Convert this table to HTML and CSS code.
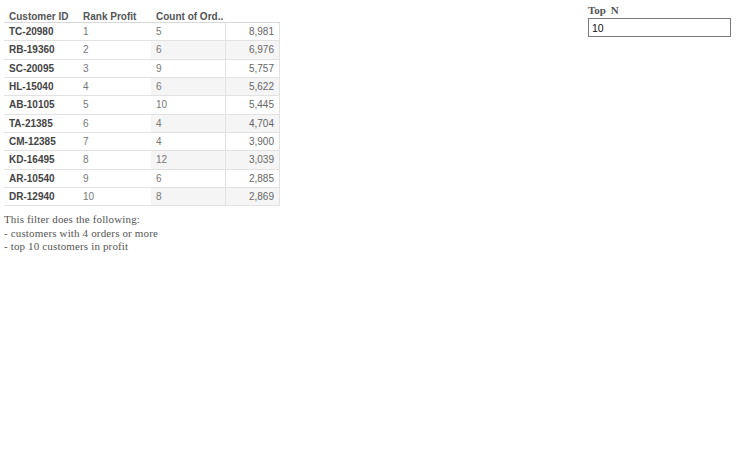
FILE: index.html
```html
<!DOCTYPE html>
<html>
<head>
<meta charset="utf-8">
<link rel="stylesheet" href="styles.css">
</head>
<body>
<div class="page">
  <div class="left">
    <div class="table">
      <div class="row head">
        <div class="c c1">Customer ID</div>
        <div class="c c2">Rank Profit</div>
        <div class="c c3">Count of Ord..</div>
        <div class="c c4"></div>
      </div>
      <div class="row"><div class="c c1">TC-20980</div><div class="c c2">1</div><div class="c c3">5</div><div class="c c4">8,981</div></div>
      <div class="row alt"><div class="c c1">RB-19360</div><div class="c c2">2</div><div class="c c3">6</div><div class="c c4">6,976</div></div>
      <div class="row"><div class="c c1">SC-20095</div><div class="c c2">3</div><div class="c c3">9</div><div class="c c4">5,757</div></div>
      <div class="row alt"><div class="c c1">HL-15040</div><div class="c c2">4</div><div class="c c3">6</div><div class="c c4">5,622</div></div>
      <div class="row"><div class="c c1">AB-10105</div><div class="c c2">5</div><div class="c c3">10</div><div class="c c4">5,445</div></div>
      <div class="row alt"><div class="c c1">TA-21385</div><div class="c c2">6</div><div class="c c3">4</div><div class="c c4">4,704</div></div>
      <div class="row"><div class="c c1">CM-12385</div><div class="c c2">7</div><div class="c c3">4</div><div class="c c4">3,900</div></div>
      <div class="row alt"><div class="c c1">KD-16495</div><div class="c c2">8</div><div class="c c3">12</div><div class="c c4">3,039</div></div>
      <div class="row"><div class="c c1">AR-10540</div><div class="c c2">9</div><div class="c c3">6</div><div class="c c4">2,885</div></div>
      <div class="row alt last"><div class="c c1">DR-12940</div><div class="c c2">10</div><div class="c c3">8</div><div class="c c4">2,869</div></div>
    </div>
    <div class="note">
      <div>This filter does the following:</div>
      <div>- customers with 4 orders or more</div>
      <div>- top 10 customers in profit</div>
    </div>
  </div>
  <div class="right">
    <div class="label">Top N</div>
    <div class="input">10</div>
  </div>
</div>
</body>
</html>
```
FILE: styles.css
```css
html, body {
  margin: 0;
  padding: 0;
  background: #fff;
}
.page {
  display: flex;
  width: 736px;
  height: 454px;
  padding: 0 5px 0 4px;
  box-sizing: border-box;
}
.left {
  width: 276px;
}
.table {
  width: 276px;
  margin-top: 10px;
  font-family: "Liberation Sans", Arial, sans-serif;
  font-size: 10px;
}
.row {
  display: flex;
  height: 17.33px;
  border-bottom: 1px solid #e2e2e2;
  align-items: stretch;
}
.row.head {
  height: 12px;
  border-bottom: 1px solid #d8d8d8;
  font-weight: bold;
  color: #555;
}
.c {
  display: flex;
  align-items: center;
  padding-left: 5px;
  box-sizing: border-box;
  white-space: nowrap;
}
.c1 { width: 74px; font-weight: bold; color: #444; }
.c2 { width: 73px; color: #777; }
.c3 { width: 74px; color: #777; }
.c4 {
  width: 55px;
  justify-content: flex-end;
  padding-right: 5px;
  color: #666;
  border-left: 1px solid #e2e2e2;
  border-right: 1px solid #e2e2e2;
}
.head .c1, .head .c2, .head .c3 { color: #555; }
.head .c4 { border: none; }
.alt .c3, .alt .c4 { background: #f5f5f5; }
.note {
  margin-top: 7px;
  font-family: "Liberation Serif", "Times New Roman", serif;
  font-size: 11px;
  letter-spacing: 0.15px;
  line-height: 13.5px;
  color: #555;
}
.right {
  margin-left: auto;
  width: 143px;
  padding-top: 4px;
}
.label {
  font-family: "Liberation Serif", "Times New Roman", serif;
  font-weight: bold;
  font-size: 11px;
  word-spacing: 2px;
  color: #555;
  height: 14px;
}
.input {
  height: 19px;
  box-sizing: border-box;
  border: 1px solid #7a7a7a;
  font-family: "Liberation Sans", Arial, sans-serif;
  font-size: 10.5px;
  color: #111;
  padding-left: 3px;
  display: flex;
  align-items: center;
}
```
